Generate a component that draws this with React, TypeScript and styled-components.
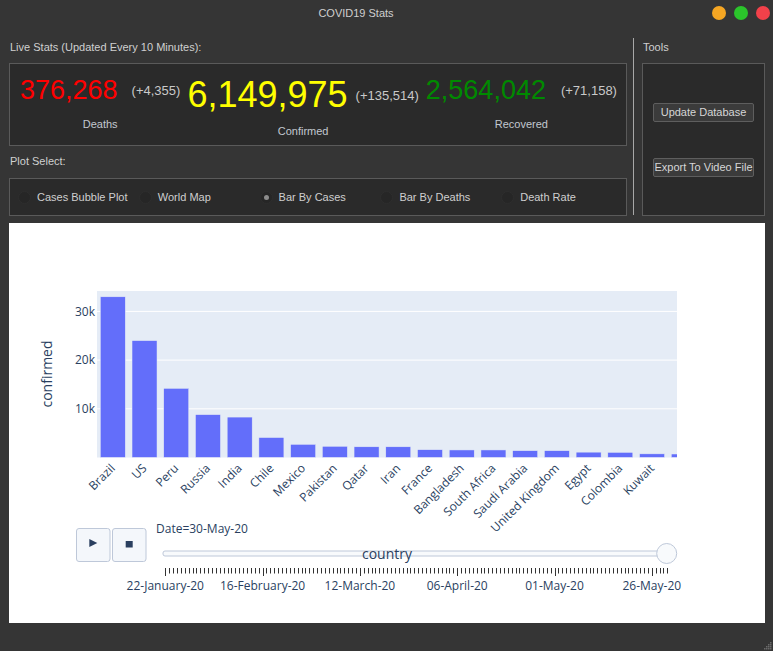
import React from "react";
import styled, { createGlobalStyle } from "styled-components";

const GlobalStyle = createGlobalStyle`
  html, body {
    margin: 0;
    padding: 0;
    background: #353535;
  }
  body {
    font-family: "Liberation Sans", Arial, sans-serif;
    font-size: 11px;
    color: #d2d2d2;
  }
  * {
    box-sizing: border-box;
  }
`;

const BARS: [string, number][] = [
  ["Brazil", 33.0],
  ["US", 24.0],
  ["Peru", 14.2],
  ["Russia", 8.8],
  ["India", 8.3],
  ["Chile", 4.1],
  ["Mexico", 2.7],
  ["Pakistan", 2.3],
  ["Qatar", 2.2],
  ["Iran", 2.2],
  ["France", 1.6],
  ["Bangladesh", 1.55],
  ["South Africa", 1.55],
  ["Saudi Arabia", 1.4],
  ["United Kingdom", 1.4],
  ["Egypt", 1.1],
  ["Colombia", 1.05],
  ["Kuwait", 0.75],
  ["", 0.72],
];

const PLOT = { left: 88, right: 668, top: 68, bottom: 234.5 };
const PX_PER_K = 4.87;
const BAR_X0 = 91.3;
const BAR_STEP = 31.72;
const BAR_W = 25;

const SLIDER_X0 = 156.3;
const DAY_W = 3.892;
const DAYS = 130;
const MAJOR = [
  [0, "22-January-20"],
  [25, "16-February-20"],
  [50, "12-March-20"],
  [75, "06-April-20"],
  [100, "01-May-20"],
  [125, "26-May-20"],
] as const;

const INK = "#2a3f5f";
const PLOT_FONT = '"Open Sans", Verdana, Arial, sans-serif';

function BarChart() {
  const zeroY = PLOT.bottom;
  return (
    <svg width="756" height="400" viewBox="0 0 756 400" fontFamily={PLOT_FONT}>
      <defs>
        <clipPath id="plotClip">
          <rect x={PLOT.left} y={PLOT.top} width={PLOT.right - PLOT.left} height={PLOT.bottom - PLOT.top} />
        </clipPath>
      </defs>
      <rect x={PLOT.left} y={PLOT.top} width={PLOT.right - PLOT.left} height={PLOT.bottom - PLOT.top} fill="#e5ecf6" />
      {[10, 20, 30].map((k) => {
        const y = zeroY - k * PX_PER_K;
        return (
          <g key={k}>
            <line x1={PLOT.left} x2={PLOT.right} y1={y} y2={y} stroke="#fff" strokeWidth="1" />
            <text x={PLOT.left - 2} y={y + 4.3} fontSize="12" fill={INK} textAnchor="end">
              {k}k
            </text>
          </g>
        );
      })}
      <g clipPath="url(#plotClip)">
        {BARS.map(([name, v], i) => {
          const h = v * PX_PER_K;
          return (
            <rect
              key={i}
              x={BAR_X0 + i * BAR_STEP}
              y={zeroY - h}
              width={BAR_W}
              height={h}
              fill="#636efa"
              stroke="#e5ecf6"
              strokeWidth="0.5"
            />
          );
        })}
      </g>
      {BARS.map(([name], i) => {
        if (!name) return null;
        const x = BAR_X0 + i * BAR_STEP + BAR_W / 2 + 3;
        const y = 246;
        return (
          <text key={name} x={x} y={y} fontSize="12" fill={INK} textAnchor="end" transform={`rotate(-45 ${x} ${y})`}>
            {name}
          </text>
        );
      })}
      <text x="43" y="151" fontSize="14" fill={INK} textAnchor="middle" transform="rotate(-90 43 151)">
        confirmed
      </text>

      {/* animation buttons */}
      <rect x="67.5" y="305.5" width="33.5" height="33" rx="2.5" fill="#f4f7fb" stroke="#bec8d9" />
      <path d="M80.3 316 L88.3 320 L80.3 324 Z" fill={INK} />
      <rect x="103.5" y="305.5" width="33.5" height="33" rx="2.5" fill="#f4f7fb" stroke="#bec8d9" />
      <rect x="116.7" y="318" width="7" height="6.5" fill={INK} />

      {/* slider */}
      <text x="147" y="310" fontSize="12" fill={INK}>
        Date=30-May-20
      </text>
      <rect x="154" y="328" width="506" height="5" rx="2" fill="#f8fafc" stroke="#bec8d9" />
      <text x="378" y="336.3" fontSize="14" fill={INK} textAnchor="middle">
        country
      </text>
      {Array.from({ length: DAYS }, (_, d) => {
        const x = Math.round(SLIDER_X0 + d * DAY_W) + 0.5;
        const major = d % 25 === 0;
        return <line key={d} x1={x} x2={x} y1={345} y2={major ? 353 : 350.5} stroke="#333" strokeWidth="1" />;
      })}
      {MAJOR.map(([d, label]) => (
        <text key={label} x={SLIDER_X0 + d * DAY_W} y="367" fontSize="12" fill={INK} textAnchor="middle">
          {label}
        </text>
      ))}
      <circle cx="657.7" cy="330.5" r="10" fill="#f8fafc" stroke="#bec8d9" />
    </svg>
  );
}

const STATS = [
  { value: "376,268", delta: "(+4,355)", label: "Deaths", color: "#ff0000", size: 27, gap: 14, mt: 14 },
  { value: "6,149,975", delta: "(+135,514)", label: "Confirmed", color: "#ffff00", size: 36, gap: 8, mt: 12 },
  { value: "2,564,042", delta: "(+71,158)", label: "Recovered", color: "#008a00", size: 27, gap: 15, mt: 14 },
];

const PLOTS = ["Cases Bubble Plot", "World Map", "Bar By Cases", "Bar By Deaths", "Death Rate"];

export default function App() {
  return (
    <>
      <GlobalStyle />
      <Window>
        <TitleBar>
          <WindowTitle>COVID19 Stats</WindowTitle>
          <Controls>
            <Dot $color="#f5a623" />
            <Dot $color="#2bc42b" />
            <Dot $color="#f2414a" />
          </Controls>
        </TitleBar>

        <Body>
          <TopSection>
            <LeftColumn>
              <SectionLabel $mt={0} $mb={7}>Live Stats (Updated Every 10 Minutes):</SectionLabel>
              <StatsBox>
                {STATS.map((s) => (
                  <StatBlock key={s.label}>
                    <StatRow $gap={s.gap}>
                      <StatNumber $color={s.color} $size={s.size}>{s.value}</StatNumber>
                      <StatDelta>{s.delta}</StatDelta>
                    </StatRow>
                    <StatLabel $mt={s.mt}>{s.label}</StatLabel>
                  </StatBlock>
                ))}
              </StatsBox>
              <SectionLabel $mt={6} $mb={8}>Plot Select:</SectionLabel>
              <RadioBox>
                {PLOTS.map((p) => (
                  <RadioItem key={p}>
                    <RadioCircle $checked={p === "Bar By Cases"} />
                    {p}
                  </RadioItem>
                ))}
              </RadioBox>
            </LeftColumn>

            <Separator />

            <RightColumn>
              <SectionLabel $mt={0} $mb={7}>Tools</SectionLabel>
              <ToolsBox>
                <ToolButton>Update Database</ToolButton>
                <ToolButton>Export To Video File</ToolButton>
              </ToolsBox>
            </RightColumn>
          </TopSection>

          <ChartPanel>
            <BarChart />
          </ChartPanel>
        </Body>

        <Grip width="8" height="8" viewBox="0 0 8 8">
          {[
            [6, 0],
            [4, 2], [6, 2],
            [2, 4], [4, 4], [6, 4],
            [0, 6], [2, 6], [4, 6], [6, 6],
          ].map(([x, y]) => (
            <rect key={`${x}-${y}`} x={x} y={y} width="1.5" height="1.5" fill="#6a6a6a" />
          ))}
        </Grip>
      </Window>
    </>
  );
}

const Window = styled.div`
  position: relative;
  width: 773px;
  height: 651px;
  background: #353535;
  display: flex;
  flex-direction: column;
  overflow: hidden;
`;

const TitleBar = styled.div`
  height: 26px;
  display: flex;
  align-items: center;
`;

const WindowTitle = styled.div`
  flex: 1;
  text-align: center;
  color: #cfcfcf;
  font-size: 11px;
`;

const Controls = styled.div`
  display: flex;
  gap: 8px;
  margin-right: 3px;
`;

const Dot = styled.span<{ $color: string }>`
  width: 14px;
  height: 14px;
  border-radius: 50%;
  background: ${(p) => p.$color};
`;

const Body = styled.div`
  display: flex;
  flex-direction: column;
  padding: 12px 8px 0 9px;
`;

const TopSection = styled.div`
  display: flex;
  height: 178px;
`;

const LeftColumn = styled.div`
  width: 618px;
  display: flex;
  flex-direction: column;
`;

const RightColumn = styled.div`
  flex: 1;
  display: flex;
  flex-direction: column;
`;

const SectionLabel = styled.div<{ $mt: number; $mb: number }>`
  height: 18px;
  line-height: 18px;
  padding-left: 1px;
  margin: ${(p) => p.$mt}px 0 ${(p) => p.$mb}px;
  color: #d0d0d0;
  font-size: 11px;
  white-space: nowrap;
`;

const Separator = styled.div`
  width: 1px;
  margin: 0 8px 1px 6px;
  background: #a8a8a8;
`;

const StatsBox = styled.div`
  height: 83px;
  border: 1px solid #5a5a5a;
  background: #2a2a2a;
  display: flex;
  align-items: flex-start;
  gap: 7px;
  padding: 13px 9px 0 10px;
`;

const StatBlock = styled.div`
  display: flex;
  flex-direction: column;
  align-items: center;
`;

const StatRow = styled.div<{ $gap: number }>`
  display: flex;
  align-items: center;
  gap: ${(p) => p.$gap}px;
`;

const StatNumber = styled.span<{ $color: string; $size: number }>`
  color: ${(p) => p.$color};
  font-size: ${(p) => p.$size}px;
  line-height: 1;
  white-space: nowrap;
`;

const StatDelta = styled.span`
  color: #c9c9c9;
  font-size: 13px;
  line-height: 1;
  white-space: nowrap;
`;

const StatLabel = styled.span<{ $mt: number }>`
  margin-top: ${(p) => p.$mt}px;
  color: #c2c8d0;
  font-size: 11px;
  line-height: 13px;
`;

const RadioBox = styled.div`
  height: 38px;
  border: 1px solid #5a5a5a;
  background: #2a2a2a;
  display: grid;
  grid-template-columns: repeat(5, 1fr);
  align-items: center;
  padding: 0 4px 0 8px;
`;

const RadioItem = styled.label`
  display: flex;
  align-items: center;
  gap: 6px;
  color: #cfcfcf;
  font-size: 11px;
  white-space: nowrap;
`;

const RadioCircle = styled.span<{ $checked: boolean }>`
  width: 13px;
  height: 13px;
  border-radius: 50%;
  background: #262626;
  border: 1px solid #2e2e2e;
  display: flex;
  align-items: center;
  justify-content: center;

  &::after {
    content: "";
    width: 5px;
    height: 5px;
    border-radius: 50%;
    background: ${(p) => (p.$checked ? "#8c8c8c" : "transparent")};
  }
`;

const ToolsBox = styled.div`
  flex: 1;
  border: 1px solid #5a5a5a;
  background: #2a2a2a;
  display: flex;
  flex-direction: column;
  align-items: center;
  justify-content: center;
  gap: 36px;
`;

const ToolButton = styled.button`
  width: 101px;
  height: 19px;
  padding: 0;
  border: 1px solid #5e5e5e;
  border-radius: 2px;
  background: #3b3b3b;
  color: #d6d6d6;
  font-family: "Liberation Sans", Arial, sans-serif;
  font-size: 11px;
  white-space: nowrap;
`;

const ChartPanel = styled.div`
  margin-top: 7px;
  width: 756px;
  height: 400px;
  background: #ffffff;
`;

const Grip = styled.svg`
  position: absolute;
  right: 1px;
  bottom: 1px;
`;
